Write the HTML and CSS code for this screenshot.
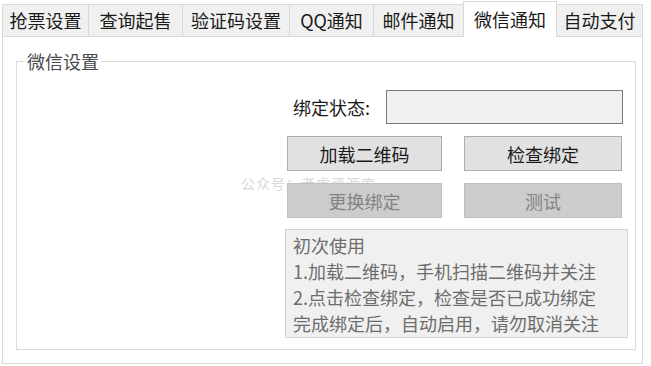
FILE: index.html
```html
<!DOCTYPE html>
<html lang="zh-CN">
<head>
<meta charset="utf-8">
<title>微信通知</title>
<link rel="stylesheet" href="styles.css">
</head>
<body>
<div class="window">
  <div class="tabs">
    <div class="tab t1">抢票设置</div>
    <div class="tab t2">查询起售</div>
    <div class="tab t3">验证码设置</div>
    <div class="tab t4">QQ通知</div>
    <div class="tab t5">邮件通知</div>
    <div class="tab t6 active">微信通知</div>
    <div class="tab t7">自动支付</div>
  </div>
  <div class="panel">
    <div class="watermark">公众号：老虎资源库</div>
    <fieldset class="group">
      <legend class="group-title">微信设置</legend>
      <div class="content">
        <div class="row status-row">
          <span class="label">绑定状态:</span>
          <div class="input"></div>
        </div>
        <div class="row btn-row">
          <button class="btn left">加载二维码</button>
          <button class="btn right">检查绑定</button>
        </div>
        <div class="row btn-row">
          <button class="btn left disabled" disabled>更换绑定</button>
          <button class="btn right disabled" disabled>测试</button>
        </div>
        <div class="info">
          <div>初次使用</div>
          <div>1.加载二维码，手机扫描二维码并关注</div>
          <div>2.点击检查绑定，检查是否已成功绑定</div>
          <div>完成绑定后，自动启用，请勿取消关注</div>
        </div>
      </div>
    </fieldset>
  </div>
</div>
</body>
</html>
```

FILE: styles.css
```css
* { box-sizing: border-box; }
html, body { margin: 0; padding: 0; background: #ffffff; }
body {
  font-family: "Noto Sans CJK SC", "Microsoft YaHei", sans-serif;
  font-size: 18px;
  color: #1a1a1a;
}
.window {
  width: 651px;
  height: 366px;
  padding: 1px 0 0 2px;
}
.tabs {
  display: flex;
  align-items: flex-end;
  height: 35px;
}
.tab {
  height: 32px;
  line-height: 30px;
  text-align: center;
  background: #f0f0f0;
  border: 1px solid #d9d9d9;
  border-bottom: none;
  border-right: none;
  white-space: nowrap;
}
.t1 { width: 86px; }
.t2 { width: 94px; }
.t3 { width: 107px; }
.t4 { width: 84px; }
.t5 { width: 90px; }
.t6 { width: 94px; }
.t7 { width: 86px; border-right: 1px solid #d9d9d9; }
.tab.active {
  height: 36px;
  line-height: 34px;
  background: #ffffff;
  border-right: 1px solid #d9d9d9;
  margin-bottom: -1px;
  position: relative;
  z-index: 2;
}
.tab.active + .tab { border-left: none; }
.panel {
  position: relative;
  z-index: 0;
  width: 641px;
  height: 328px;
  border: 1px solid #d9d9d9;
  background: #ffffff;
  padding-top: 12px;
}
.watermark {
  position: absolute;
  left: 238px;
  top: 138px;
  z-index: -1;
  font-size: 14px;
  line-height: 16px;
  color: #d8d8d8;
  letter-spacing: 1px;
  white-space: nowrap;
}
.group {
  margin: 0 0 0 13px;
  padding: 0;
  width: 620px;
  height: 301px;
  border: 1px solid #dcdcdc;
  min-width: 0;
}
.group-title {
  margin-left: 8px;
  padding: 0 2px;
  line-height: 24px;
  color: #4a4a4a;
}
.content {
  width: 343px;
  margin: 17px 7px 0 auto;
  display: flex;
  flex-direction: column;
}
.row { display: flex; align-items: center; }
.status-row { height: 34px; }
.label {
  width: 101px;
  padding-left: 8px;
  line-height: 24px;
  color: #1a1a1a;
}
.input {
  width: 237px;
  height: 34px;
  background: #f0f0f0;
  border: 1px solid #7a7a7a;
}
.btn-row { margin-top: 12px; }
.btn {
  font-family: inherit;
  font-size: 18px;
  color: #1a1a1a;
  height: 35px;
  padding: 0;
  line-height: 20px;
  background: #e1e1e1;
  border: 1px solid #adadad;
  border-radius: 0;
}
.btn.left { width: 155px; margin-left: 2px; }
.btn.right { width: 158px; margin-left: 22px; }
.btn.disabled {
  background: #cccccc;
  border-color: #bfbfbf;
  color: #838383;
}
.info {
  margin-top: 11px;
  height: 109px;
  background: #f0f0f0;
  border: 1px solid #d3d3d3;
  padding: 2px 0 0 7px;
  line-height: 26px;
  color: #6d6d6d;
  white-space: nowrap;
  overflow: hidden;
}
```
